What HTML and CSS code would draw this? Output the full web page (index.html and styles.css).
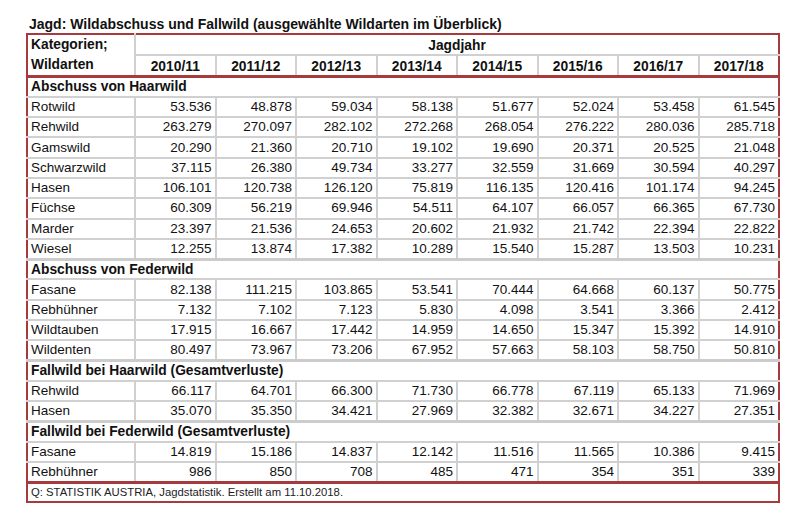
FILE: index.html
```html
<!DOCTYPE html>
<html lang="de">
<head>
<meta charset="utf-8">
<title>Jagd: Wildabschuss und Fallwild</title>
<link rel="stylesheet" href="styles.css">
</head>
<body>
<div class="page">
  <h1 class="title">Jagd: Wildabschuss und Fallwild (ausgewählte Wildarten im Überblick)</h1>
  <table class="stats">
    <colgroup>
      <col class="c-label">
      <col class="c-num"><col class="c-num"><col class="c-num"><col class="c-num">
      <col class="c-num"><col class="c-num"><col class="c-num"><col class="c-num">
    </colgroup>
    <thead>
      <tr class="hrow">
        <th class="corner" rowspan="2">Kategorien;<br>Wildarten</th>
        <th class="group" colspan="8">Jagdjahr</th>
      </tr>
      <tr class="hrow">
        <th>2010/11</th><th>2011/12</th><th>2012/13</th><th>2013/14</th><th>2014/15</th><th>2015/16</th><th>2016/17</th><th>2017/18</th>
      </tr>
    </thead>
    <tbody>
      <tr class="section first"><td colspan="9">Abschuss von Haarwild</td></tr>
      <tr><td>Rotwild</td><td>53.536</td><td>48.878</td><td>59.034</td><td>58.138</td><td>51.677</td><td>52.024</td><td>53.458</td><td>61.545</td></tr>
      <tr><td>Rehwild</td><td>263.279</td><td>270.097</td><td>282.102</td><td>272.268</td><td>268.054</td><td>276.222</td><td>280.036</td><td>285.718</td></tr>
      <tr><td>Gamswild</td><td>20.290</td><td>21.360</td><td>20.710</td><td>19.102</td><td>19.690</td><td>20.371</td><td>20.525</td><td>21.048</td></tr>
      <tr><td>Schwarzwild</td><td>37.115</td><td>26.380</td><td>49.734</td><td>33.277</td><td>32.559</td><td>31.669</td><td>30.594</td><td>40.297</td></tr>
      <tr><td>Hasen</td><td>106.101</td><td>120.738</td><td>126.120</td><td>75.819</td><td>116.135</td><td>120.416</td><td>101.174</td><td>94.245</td></tr>
      <tr><td>Füchse</td><td>60.309</td><td>56.219</td><td>69.946</td><td>54.511</td><td>64.107</td><td>66.057</td><td>66.365</td><td>67.730</td></tr>
      <tr><td>Marder</td><td>23.397</td><td>21.536</td><td>24.653</td><td>20.602</td><td>21.932</td><td>21.742</td><td>22.394</td><td>22.822</td></tr>
      <tr><td>Wiesel</td><td>12.255</td><td>13.874</td><td>17.382</td><td>10.289</td><td>15.540</td><td>15.287</td><td>13.503</td><td>10.231</td></tr>
      <tr class="section"><td colspan="9">Abschuss von Federwild</td></tr>
      <tr><td>Fasane</td><td>82.138</td><td>111.215</td><td>103.865</td><td>53.541</td><td>70.444</td><td>64.668</td><td>60.137</td><td>50.775</td></tr>
      <tr><td>Rebhühner</td><td>7.132</td><td>7.102</td><td>7.123</td><td>5.830</td><td>4.098</td><td>3.541</td><td>3.366</td><td>2.412</td></tr>
      <tr><td>Wildtauben</td><td>17.915</td><td>16.667</td><td>17.442</td><td>14.959</td><td>14.650</td><td>15.347</td><td>15.392</td><td>14.910</td></tr>
      <tr><td>Wildenten</td><td>80.497</td><td>73.967</td><td>73.206</td><td>67.952</td><td>57.663</td><td>58.103</td><td>58.750</td><td>50.810</td></tr>
      <tr class="section"><td colspan="9">Fallwild bei Haarwild (Gesamtverluste)</td></tr>
      <tr><td>Rehwild</td><td>66.117</td><td>64.701</td><td>66.300</td><td>71.730</td><td>66.778</td><td>67.119</td><td>65.133</td><td>71.969</td></tr>
      <tr><td>Hasen</td><td>35.070</td><td>35.350</td><td>34.421</td><td>27.969</td><td>32.382</td><td>32.671</td><td>34.227</td><td>27.351</td></tr>
      <tr class="section"><td colspan="9">Fallwild bei Federwild (Gesamtverluste)</td></tr>
      <tr><td>Fasane</td><td>14.819</td><td>15.186</td><td>14.837</td><td>12.142</td><td>11.516</td><td>11.565</td><td>10.386</td><td>9.415</td></tr>
      <tr><td>Rebhühner</td><td>986</td><td>850</td><td>708</td><td>485</td><td>471</td><td>354</td><td>351</td><td>339</td></tr>
    </tbody>
    <tfoot>
      <tr class="source"><td colspan="9">Q: STATISTIK AUSTRIA, Jagdstatistik. Erstellt am 11.10.2018.</td></tr>
    </tfoot>
  </table>
</div>
</body>
</html>
```
FILE: styles.css
```css
html, body {
  margin: 0;
  padding: 0;
  background: #ffffff;
}

body {
  font-family: "Liberation Sans", Arial, sans-serif;
  color: #111111;
}

.page {
  padding: 17px 0 0 26px;
}

.title {
  margin: 0 0 1px 3px;
  font-size: 14px;
  line-height: 15px;
  font-weight: bold;
  color: #111111;
}

.stats {
  width: 752px;
  table-layout: fixed;
  border-collapse: collapse;
  border: 2px solid #a63a3c;
  font-size: 13.5px;
}

.c-label { width: 108px; }
.c-num { width: 80.5px; }

.stats th,
.stats td {
  border: 2px solid #d0d0d0;
  padding: 0 3px;
  line-height: 16px;
  white-space: nowrap;
}

.stats td {
  text-align: right;
}

.stats td:first-child {
  text-align: left;
}

.hrow {
  height: 20px;
}

.stats th {
  font-size: 13.8px;
  font-weight: bold;
  text-align: center;
  vertical-align: bottom;
}

.stats th.corner {
  text-align: left;
  vertical-align: top;
  line-height: 20px;
  padding-top: 0;
}

.stats thead tr:last-child th {
  border-bottom: 3px solid #a63a3c;
}

.stats th.corner {
  border-bottom: 3px solid #a63a3c;
}

.stats tbody tr {
  height: 20.3px;
}

.section td {
  font-size: 13.8px;
  font-weight: bold;
  text-align: left;
  border-top: 3px solid #cccccc;
}

.section.first td {
  border-top: 3px solid #a63a3c;
}

.source td {
  border-top: 3px solid #a63a3c;
  text-align: left;
  font-size: 11.3px;
  height: 17px;
  color: #222222;
}

.stats .source td {
  border-left: 2px solid #a63a3c;
  border-right: 2px solid #a63a3c;
  border-bottom: 2px solid #a63a3c;
}

.stats tr td:first-child,
.stats tr th:first-child {
  border-left: 2px solid #a63a3c;
}

.stats tr td:last-child,
.stats thead th.group,
.stats thead tr:last-child th:last-child {
  border-right: 2px solid #a63a3c;
}

.stats thead th {
  border-top-color: #a63a3c;
}

.stats thead tr:last-child th {
  border-top-color: #d0d0d0;
}
```
